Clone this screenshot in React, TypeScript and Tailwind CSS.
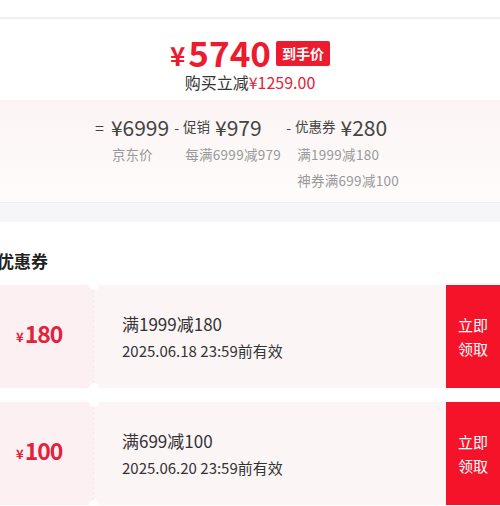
const FONT = '[font-family:"Noto_Sans_CJK_SC","Noto_Sans",sans-serif]'

const coupons = [
  { amount: '180', rule: '满1999减180', expire: '2025.06.18 23:59前有效' },
  { amount: '100', rule: '满699减100', expire: '2025.06.20 23:59前有效' },
]

function PriceHeader() {
  return (
    <div className="flex h-[83px] flex-col items-center border-t-2 border-[#f3eeee] bg-white pt-[15px]">
      <div className="flex items-center">
        <span className="mr-[3px] mt-[6px] text-[26px] font-semibold leading-none text-[#ec1b2e]">¥</span>
        <span className="text-[35px] font-semibold leading-none text-[#ec1b2e]">5740</span>
        <span className="ml-[5px] mt-[3px] flex h-[25px] items-center rounded-[2px] bg-[#ec1b2e] px-[6px] text-[14px] font-bold leading-none text-white">
          到手价
        </span>
      </div>
      <div className="mt-[3px] text-[16px] leading-[20px] text-[#333]">
        购买立减<span className="text-[#e2233a]">¥1259.00</span>
      </div>
    </div>
  )
}

function Breakdown() {
  return (
    <div className="h-[103px] border-b border-[#eee] bg-gradient-to-b from-[#fcf4f4] to-[#fefcfc] pl-[95px] pt-[14px] text-[#444]">
      <div className="flex items-start">
        <div className="flex flex-col">
          <div className="flex items-center">
            <span className="mr-[7px] text-[16px] leading-none">=</span>
            <span className="text-[21px] leading-[26px]">¥6999</span>
          </div>
          <span className="ml-[17px] mt-[4px] text-[13.5px] leading-[20px] text-[#999]">京东价</span>
        </div>
        <div className="ml-[5px] flex flex-col">
          <div className="flex items-center">
            <span className="mr-[4px] text-[14px] leading-none">-</span>
            <span className="mr-[5px] text-[13.5px] leading-none">促销</span>
            <span className="text-[21px] leading-[26px]">¥979</span>
          </div>
          <span className="ml-[11px] mt-[4px] text-[13.5px] leading-[20px] tracking-[0.3px] text-[#999]">每满6999减979</span>
        </div>
        <div className="ml-[5px] flex flex-col">
          <div className="flex items-center">
            <span className="mr-[4px] text-[14px] leading-none">-</span>
            <span className="mr-[5px] text-[13.5px] leading-none">优惠券</span>
            <span className="text-[21px] leading-[26px]">¥280</span>
          </div>
          <span className="ml-[11px] mt-[4px] text-[13.5px] leading-[20px] tracking-[0.3px] text-[#999]">满1999减180</span>
          <span className="ml-[11px] mt-[6px] text-[13.5px] leading-[20px] tracking-[0.3px] text-[#999]">神券满699减100</span>
        </div>
      </div>
    </div>
  )
}

function Coupon({ amount, rule, expire }: { amount: string; rule: string; expire: string }) {
  return (
    <div className="flex h-[103px]">
      <div className="flex w-[93px] items-center bg-[#fdf0f2] pb-[6px] pl-[16px] text-[#e4203a]">
        <span className="mr-[1px] mt-[6px] text-[13px] font-semibold leading-none">¥</span>
        <span className="text-[23px] font-semibold leading-none tracking-[-1px]">{amount}</span>
      </div>
      <div className="relative w-[4px] border-l border-dashed border-[#f8e8ea] bg-[#fcf4f5]">
        <span className="absolute -top-[5px] left-[-5px] h-[10px] w-[10px] rounded-full bg-white" />
        <span className="absolute -bottom-[5px] left-[-5px] h-[10px] w-[10px] rounded-full bg-white" />
      </div>
      <div className="flex flex-1 flex-col justify-center bg-[#fcf5f6] pl-[25px] text-[#333]">
        <span className="text-[17px] leading-[24px]">{rule}</span>
        <span className="mt-[4px] text-[15px] leading-[22px]">{expire}</span>
      </div>
      <div className="flex w-[54px] flex-col items-center justify-center bg-[#f5132a] text-[15px] leading-[24px] text-white">
        <span>立即</span>
        <span>领取</span>
      </div>
    </div>
  )
}

export default function App() {
  return (
    <div className={`h-[506px] w-[500px] overflow-hidden bg-white ${FONT}`}>
      <div className="h-[17px] bg-white" />
      <PriceHeader />
      <Breakdown />
      <div className="h-[19px] bg-[#f6f6f8]" />
      <div className="bg-white pt-[27px]">
        <h2 className="ml-[-3px] text-[17px] font-bold leading-[24px] text-[#222]">优惠券</h2>
        <div className="mt-[12px] flex flex-col gap-[14px]">
          {coupons.map((c) => (
            <Coupon key={c.amount} {...c} />
          ))}
        </div>
      </div>
    </div>
  )
}
